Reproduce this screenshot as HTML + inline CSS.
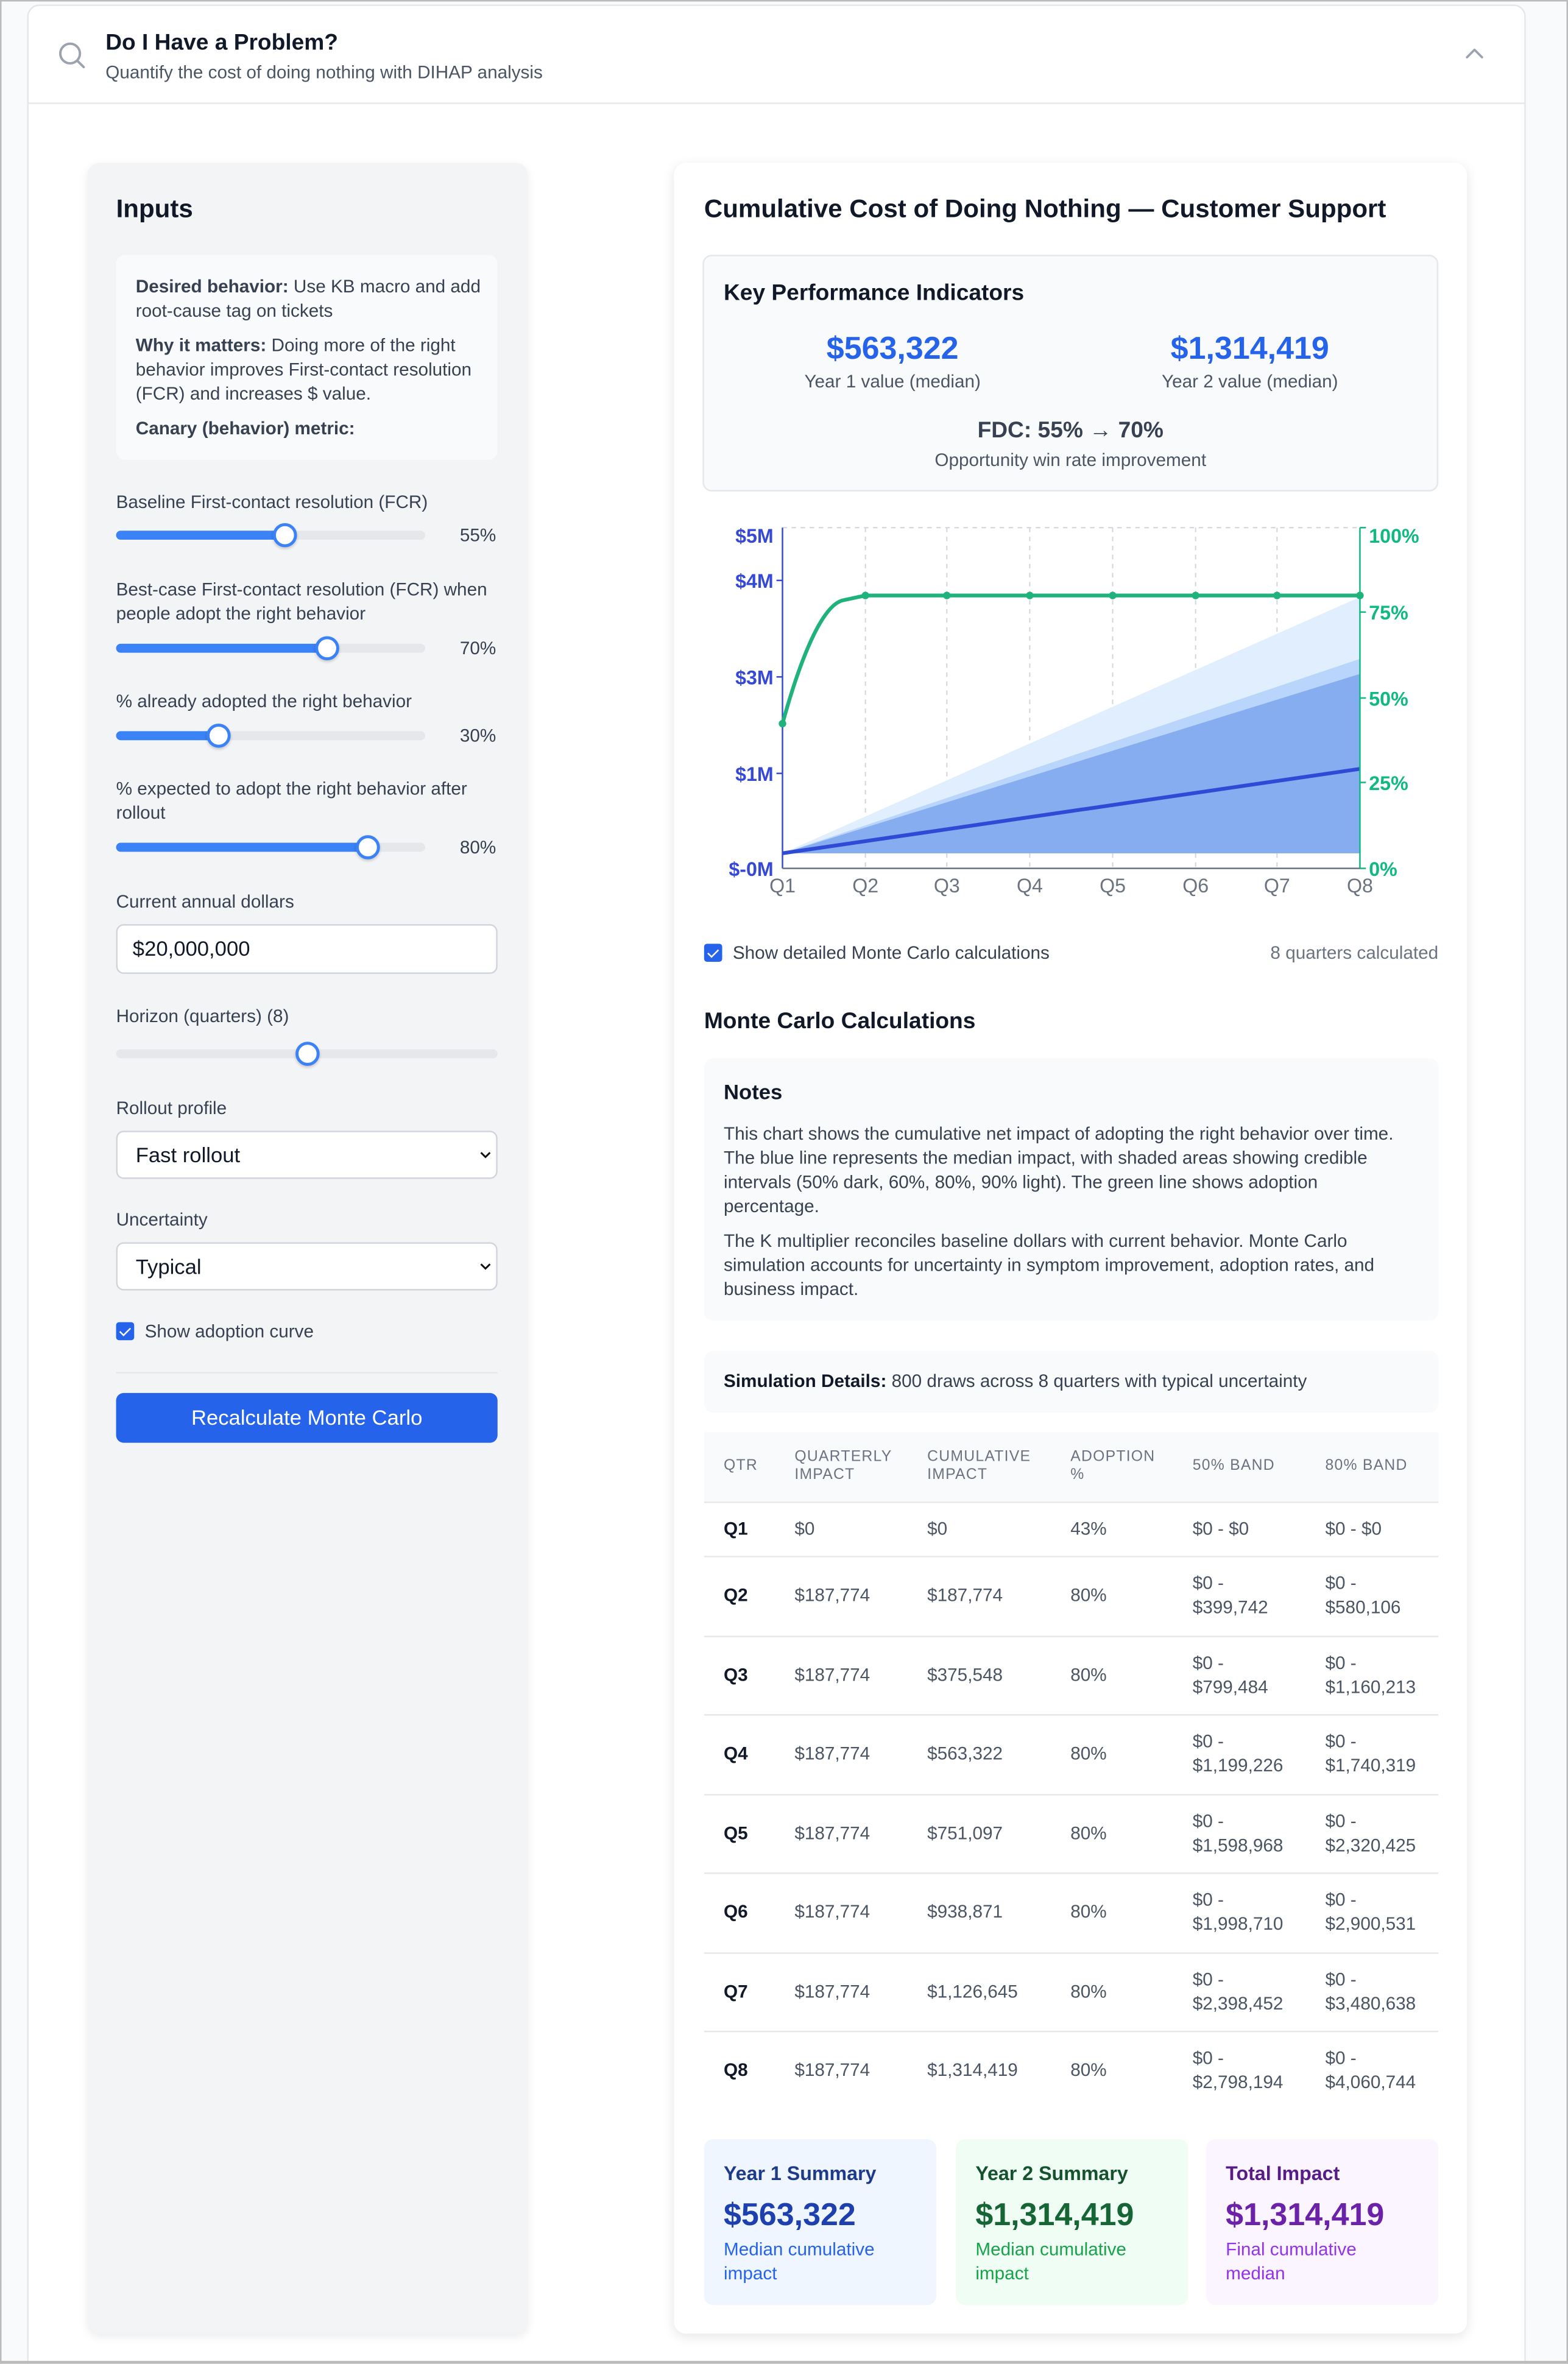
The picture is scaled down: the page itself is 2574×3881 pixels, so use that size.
<!DOCTYPE html>
<html><head><meta charset="utf-8"><style>
html,body{margin:0;padding:0;width:2574px;height:3880px;overflow:hidden;background:#f9fafb}
#w{position:absolute;left:0;top:0;width:1040px;height:1568px;transform:scale(2.475);transform-origin:0 0;font-family:"Liberation Sans",sans-serif;color:#111827;overflow:hidden}
.a{position:absolute;white-space:nowrap}
.t12{font-size:12px;line-height:16px}
.g{color:#374151}
.m{color:#4b5563}
.sl{position:absolute;left:77px;width:205px;height:6px;border-radius:3px;background:#e5e7eb}
.sl i{position:absolute;left:0;top:0;height:6px;border-radius:3px;background:#3b82f6}
.sl b{position:absolute;top:-5px;width:12px;height:12px;border-radius:50%;background:#fff;border:2px solid #3b82f6;box-shadow:0 1px 2px rgba(0,0,0,.2)}
.box{position:absolute;background:#fff;border:1px solid #d1d5db;border-radius:5px;box-sizing:border-box}
.cb{position:absolute;width:12px;height:12px;border-radius:2px;background:#2563eb}
.cb:after{content:"";position:absolute;left:4px;top:1.5px;width:3px;height:6px;border:solid #fff;border-width:0 1.6px 1.6px 0;transform:rotate(45deg)}
.th{color:#6b7280;font-size:10px;letter-spacing:.5px;line-height:12px}
.row{position:absolute;left:467px;width:487px;border-top:1px solid #e5e7eb}
.td{font-size:12px;line-height:16px;color:#4b5563}
</style></head><body><div id="w">
<div class="a" style="left:18px;top:3px;width:994px;height:1600px;background:#fff;border:1px solid #e5e7eb;border-radius:8px;box-sizing:border-box"></div>
<div class="a" style="left:0;top:0;width:1040px;height:1px;background:#bbb"></div>
<div class="a" style="left:0;top:0;width:1px;height:1568px;background:#bbb"></div>
<div class="a" style="left:1039px;top:0;width:1px;height:1568px;background:#bbb"></div>
<div class="a" style="left:0;top:1566px;width:1040px;height:2px;background:#bbb"></div>
<div class="a" style="left:18px;top:68px;width:994px;height:1px;background:#e5e7eb"></div>
<svg class="a" style="left:38px;top:27px" width="20" height="20" viewBox="0 0 20 20"><circle cx="8.5" cy="8.5" r="6.5" fill="none" stroke="#9ca3af" stroke-width="1.6"/><line x1="13.2" y1="13.2" x2="17.5" y2="17.5" stroke="#9ca3af" stroke-width="1.6" stroke-linecap="round"/></svg>
<div class="a" style="left:70px;top:19px;font-size:15px;font-weight:bold;line-height:20px;color:#111827">Do I Have a Problem?</div>
<div class="a t12 m" style="left:70px;top:40px">Quantify the cost of doing nothing with DIHAP analysis</div>
<svg class="a" style="left:971px;top:30px" width="14" height="10" viewBox="0 0 14 10"><path d="M2 8 L7 3 L12 8" fill="none" stroke="#9ca3af" stroke-width="1.5" stroke-linecap="round" stroke-linejoin="round"/></svg>

<div class="a" style="left:58px;top:108px;width:292px;height:1440px;background:#f3f4f6;border-radius:8px;box-shadow:0 2px 6px rgba(0,0,0,.08)"></div>
<div class="a" style="left:77px;top:129px;font-size:17px;font-weight:bold;line-height:20px">Inputs</div>
<div class="a" style="left:77px;top:169px;width:253px;height:136px;background:#f9fafb;border-radius:6px"></div>
<div class="a t12 g" style="left:90px;top:182px;line-height:16px;white-space:normal;width:235px"><b>Desired behavior:</b> Use KB macro and add root-cause tag on tickets</div>
<div class="a t12 g" style="left:90px;top:221px;white-space:normal;width:235px"><b>Why it matters:</b> Doing more of the right behavior improves First-contact resolution (FCR) and increases $ value.</div>
<div class="a t12 g" style="left:90px;top:276px"><b>Canary (behavior) metric:</b></div>

<div class="a t12 g" style="left:77px;top:325px">Baseline First-contact resolution (FCR)</div>
<div class="sl" style="top:352px"><i style="width:112px"></i><b style="left:104px"></b></div>
<div class="a t12 g" style="left:305px;top:347px">55%</div>
<div class="a t12 g" style="left:77px;top:383px;line-height:16px">Best-case First-contact resolution (FCR) when<br>people adopt the right behavior</div>
<div class="sl" style="top:427px"><i style="width:140px"></i><b style="left:132px"></b></div>
<div class="a t12 g" style="left:305px;top:422px">70%</div>
<div class="a t12 g" style="left:77px;top:457px">% already adopted the right behavior</div>
<div class="sl" style="top:485px"><i style="width:68px"></i><b style="left:60px"></b></div>
<div class="a t12 g" style="left:305px;top:480px">30%</div>
<div class="a t12 g" style="left:77px;top:515px;line-height:16px">% expected to adopt the right behavior after<br>rollout</div>
<div class="sl" style="top:559px"><i style="width:167px"></i><b style="left:159px"></b></div>
<div class="a t12 g" style="left:305px;top:554px">80%</div>
<div class="a t12 g" style="left:77px;top:590px">Current annual dollars</div>
<div class="box" style="left:77px;top:613px;width:253px;height:33px"></div>
<div class="a" style="left:88px;top:621px;font-size:14px;line-height:17px">$20,000,000</div>
<div class="a t12 g" style="left:77px;top:666px">Horizon (quarters) (8)</div>
<div class="sl" style="top:696px;width:253px"><b style="left:119px;top:-5px"></b></div>
<div class="a t12 g" style="left:77px;top:727px">Rollout profile</div>
<div class="box" style="left:77px;top:750px;width:253px;height:32px"></div>
<div class="a" style="left:90px;top:758px;font-size:14px;line-height:17px">Fast rollout</div>
<svg class="a" style="left:318px;top:762px" width="8" height="8" viewBox="0 0 8 8"><path d="M1 2.5 L4 5.5 L7 2.5" fill="none" stroke="#111" stroke-width="1.2"/></svg>
<div class="a t12 g" style="left:77px;top:801px">Uncertainty</div>
<div class="box" style="left:77px;top:824px;width:253px;height:32px"></div>
<div class="a" style="left:90px;top:832px;font-size:14px;line-height:17px">Typical</div>
<svg class="a" style="left:318px;top:836px" width="8" height="8" viewBox="0 0 8 8"><path d="M1 2.5 L4 5.5 L7 2.5" fill="none" stroke="#111" stroke-width="1.2"/></svg>
<div class="cb" style="left:77px;top:877px"></div>
<div class="a t12 g" style="left:96px;top:875px">Show adoption curve</div>
<div class="a" style="left:77px;top:910px;width:253px;height:1px;background:#e5e7eb"></div>
<div class="a" style="left:77px;top:924px;width:253px;height:33px;background:#2563eb;border-radius:5px;color:#fff;font-size:14px;line-height:33px;text-align:center">Recalculate Monte Carlo</div>

<div class="a" style="left:447px;top:108px;width:526px;height:1440px;background:#fff;border-radius:8px;box-shadow:0 2px 8px rgba(0,0,0,.1)"></div>
<div class="a" style="left:467px;top:129px;font-size:17px;font-weight:bold;line-height:20px">Cumulative Cost of Doing Nothing — Customer Support</div>
<div class="a" style="left:466px;top:169px;width:488px;height:157px;background:#f9fafb;border:1px solid #e5e7eb;border-radius:6px;box-sizing:border-box"></div>
<div class="a" style="left:480px;top:185px;font-size:15px;font-weight:bold;line-height:20px">Key Performance Indicators</div>
<div class="a" style="left:492px;top:219px;width:200px;text-align:center;font-size:21px;font-weight:bold;line-height:25px;color:#2563eb">$563,322</div>
<div class="a t12 m" style="left:492px;top:245px;width:200px;text-align:center">Year 1 value (median)</div>
<div class="a" style="left:729px;top:219px;width:200px;text-align:center;font-size:21px;font-weight:bold;line-height:25px;color:#2563eb">$1,314,419</div>
<div class="a t12 m" style="left:729px;top:245px;width:200px;text-align:center">Year 2 value (median)</div>
<div class="a" style="left:610px;top:276px;width:200px;text-align:center;font-size:15px;font-weight:bold;line-height:20px;color:#374151">FDC: 55% → 70%</div>
<div class="a t12 m" style="left:560px;top:297px;width:300px;text-align:center">Opportunity win rate improvement</div>

<svg class="a" style="left:467px;top:340px" width="490" height="260" viewBox="467 340 490 260" font-family="Liberation Sans, sans-serif">
<g stroke="#d1d5db" stroke-width="0.8" stroke-dasharray="3,3">
<line x1="519" y1="350" x2="902" y2="350"/>
<line x1="574" y1="350" x2="574" y2="576"/><line x1="628" y1="350" x2="628" y2="576"/><line x1="683" y1="350" x2="683" y2="576"/><line x1="738" y1="350" x2="738" y2="576"/><line x1="793" y1="350" x2="793" y2="576"/><line x1="847" y1="350" x2="847" y2="576"/>
</g>
<polygon points="519,566 902,396 902,566" fill="#e0eefe"/>
<polygon points="519,566 902,437 902,566" fill="#bad5fb"/>
<polygon points="519,566 902,447 902,566" fill="#85adf0"/>
<line x1="519" y1="566" x2="902" y2="510" stroke="#2f4bd6" stroke-width="2.5"/>
<line x1="519" y1="350" x2="519" y2="576" stroke="#3549d6" stroke-width="1"/>
<line x1="902" y1="350" x2="902" y2="576" stroke="#10b981" stroke-width="1"/>
<line x1="519" y1="576" x2="902" y2="576" stroke="#6b7280" stroke-width="1"/>
<path d="M519 480 C530 440 545 400 560 398 L574 395 L902 395" fill="none" stroke="#1fb37b" stroke-width="2.5"/>
<g fill="#1fb37b"><circle cx="519" cy="480" r="2.5"/><circle cx="574" cy="395" r="2.5"/><circle cx="628" cy="395" r="2.5"/><circle cx="683" cy="395" r="2.5"/><circle cx="738" cy="395" r="2.5"/><circle cx="793" cy="395" r="2.5"/><circle cx="847" cy="395" r="2.5"/><circle cx="902" cy="395" r="2.5"/></g>
<g fill="#3549d6" font-size="13" font-weight="bold" text-anchor="end">
<text x="513" y="360">$5M</text><text x="513" y="390">$4M</text><text x="513" y="454">$3M</text><text x="513" y="518">$1M</text><text x="513" y="581">$-0M</text></g>
<g stroke="#3549d6"><line x1="515" y1="385" x2="519" y2="385"/><line x1="515" y1="449" x2="519" y2="449"/><line x1="515" y1="513" x2="519" y2="513"/></g>
<g stroke="#10b981"><line x1="902" y1="350" x2="906" y2="350"/><line x1="902" y1="406" x2="906" y2="406"/><line x1="902" y1="463" x2="906" y2="463"/><line x1="902" y1="519" x2="906" y2="519"/><line x1="902" y1="576" x2="906" y2="576"/></g>
<g fill="#10b981" font-size="13" font-weight="bold">
<text x="908" y="360">100%</text><text x="908" y="411">75%</text><text x="908" y="468">50%</text><text x="908" y="524">25%</text><text x="908" y="581">0%</text></g>
<g fill="#6b7280" font-size="13" text-anchor="middle">
<text x="519" y="592">Q1</text><text x="574" y="592">Q2</text><text x="628" y="592">Q3</text><text x="683" y="592">Q4</text><text x="738" y="592">Q5</text><text x="793" y="592">Q6</text><text x="847" y="592">Q7</text><text x="902" y="592">Q8</text></g>
</svg>

<div class="cb" style="left:467px;top:626px"></div>
<div class="a t12 g" style="left:486px;top:624px">Show detailed Monte Carlo calculations</div>
<div class="a t12" style="left:800px;top:624px;width:154px;text-align:right;color:#6b7280">8 quarters calculated</div>
<div class="a" style="left:467px;top:668px;font-size:15px;font-weight:bold;line-height:20px">Monte Carlo Calculations</div>
<div class="a" style="left:467px;top:702px;width:487px;height:174px;background:#f9fafb;border-radius:6px"></div>
<div class="a" style="left:480px;top:715px;font-size:14px;font-weight:bold;line-height:18px">Notes</div>
<div class="a t12 g" style="left:480px;top:744px;width:460px;white-space:normal">This chart shows the cumulative net impact of adopting the right behavior over time. The blue line represents the median impact, with shaded areas showing credible intervals (50% dark, 60%, 80%, 90% light). The green line shows adoption percentage.</div>
<div class="a t12 g" style="left:480px;top:815px;width:460px;white-space:normal">The K multiplier reconciles baseline dollars with current behavior. Monte Carlo simulation accounts for uncertainty in symptom improvement, adoption rates, and business impact.</div>
<div class="a" style="left:467px;top:896px;width:487px;height:41px;background:#f9fafb;border-radius:6px"></div>
<div class="a t12 g" style="left:480px;top:908px"><b style="color:#111827">Simulation Details:</b> 800 draws across 8 quarters with typical uncertainty</div>

<div class="a" style="left:467px;top:950px;width:487px;height:46px;background:#f9fafb"></div>
<div class="a th" style="left:480px;top:967px">QTR</div>
<div class="a th" style="left:527px;top:961px">QUARTERLY<br>IMPACT</div>
<div class="a th" style="left:615px;top:961px">CUMULATIVE<br>IMPACT</div>
<div class="a th" style="left:710px;top:961px">ADOPTION<br>%</div>
<div class="a th" style="left:791px;top:967px">50% BAND</div>
<div class="a th" style="left:879px;top:967px">80% BAND</div>

<div class="row" style="top:996px"></div>
<div class="a td" style="left:480px;top:1006px;color:#111827;font-weight:bold">Q1</div>
<div class="a td" style="left:527px;top:1006px">$0</div><div class="a td" style="left:615px;top:1006px">$0</div><div class="a td" style="left:710px;top:1006px">43%</div><div class="a td" style="left:791px;top:1006px">$0 - $0</div><div class="a td" style="left:879px;top:1006px">$0 - $0</div>

<div class="row" style="top:1032px"></div>
<div class="a td" style="left:480px;top:1050px;color:#111827;font-weight:bold">Q2</div><div class="a td" style="left:527px;top:1050px">$187,774</div><div class="a td" style="left:615px;top:1050px">$187,774</div><div class="a td" style="left:710px;top:1050px">80%</div><div class="a td" style="left:791px;top:1042px">$0 -<br>$399,742</div><div class="a td" style="left:879px;top:1042px">$0 -<br>$580,106</div>

<div class="row" style="top:1085px"></div>
<div class="a td" style="left:480px;top:1103px;color:#111827;font-weight:bold">Q3</div><div class="a td" style="left:527px;top:1103px">$187,774</div><div class="a td" style="left:615px;top:1103px">$375,548</div><div class="a td" style="left:710px;top:1103px">80%</div><div class="a td" style="left:791px;top:1095px">$0 -<br>$799,484</div><div class="a td" style="left:879px;top:1095px">$0 -<br>$1,160,213</div>

<div class="row" style="top:1137px"></div>
<div class="a td" style="left:480px;top:1155px;color:#111827;font-weight:bold">Q4</div><div class="a td" style="left:527px;top:1155px">$187,774</div><div class="a td" style="left:615px;top:1155px">$563,322</div><div class="a td" style="left:710px;top:1155px">80%</div><div class="a td" style="left:791px;top:1147px">$0 -<br>$1,199,226</div><div class="a td" style="left:879px;top:1147px">$0 -<br>$1,740,319</div>

<div class="row" style="top:1190px"></div>
<div class="a td" style="left:480px;top:1208px;color:#111827;font-weight:bold">Q5</div><div class="a td" style="left:527px;top:1208px">$187,774</div><div class="a td" style="left:615px;top:1208px">$751,097</div><div class="a td" style="left:710px;top:1208px">80%</div><div class="a td" style="left:791px;top:1200px">$0 -<br>$1,598,968</div><div class="a td" style="left:879px;top:1200px">$0 -<br>$2,320,425</div>

<div class="row" style="top:1242px"></div>
<div class="a td" style="left:480px;top:1260px;color:#111827;font-weight:bold">Q6</div><div class="a td" style="left:527px;top:1260px">$187,774</div><div class="a td" style="left:615px;top:1260px">$938,871</div><div class="a td" style="left:710px;top:1260px">80%</div><div class="a td" style="left:791px;top:1252px">$0 -<br>$1,998,710</div><div class="a td" style="left:879px;top:1252px">$0 -<br>$2,900,531</div>

<div class="row" style="top:1295px"></div>
<div class="a td" style="left:480px;top:1313px;color:#111827;font-weight:bold">Q7</div><div class="a td" style="left:527px;top:1313px">$187,774</div><div class="a td" style="left:615px;top:1313px">$1,126,645</div><div class="a td" style="left:710px;top:1313px">80%</div><div class="a td" style="left:791px;top:1305px">$0 -<br>$2,398,452</div><div class="a td" style="left:879px;top:1305px">$0 -<br>$3,480,638</div>

<div class="row" style="top:1347px"></div>
<div class="a td" style="left:480px;top:1365px;color:#111827;font-weight:bold">Q8</div><div class="a td" style="left:527px;top:1365px">$187,774</div><div class="a td" style="left:615px;top:1365px">$1,314,419</div><div class="a td" style="left:710px;top:1365px">80%</div><div class="a td" style="left:791px;top:1357px">$0 -<br>$2,798,194</div><div class="a td" style="left:879px;top:1357px">$0 -<br>$4,060,744</div>

<div class="a" style="left:467px;top:1419px;width:154px;height:110px;background:#eff6ff;border-radius:6px"></div>
<div class="a" style="left:480px;top:1433px;font-size:13px;font-weight:bold;line-height:17px;color:#1e3a8a">Year 1 Summary</div>
<div class="a" style="left:480px;top:1457px;font-size:21px;font-weight:bold;line-height:26px;color:#1e40af">$563,322</div>
<div class="a t12" style="left:480px;top:1484px;color:#2563eb">Median cumulative<br>impact</div>

<div class="a" style="left:634px;top:1419px;width:154px;height:110px;background:#f0fdf4;border-radius:6px"></div>
<div class="a" style="left:647px;top:1433px;font-size:13px;font-weight:bold;line-height:17px;color:#14532d">Year 2 Summary</div>
<div class="a" style="left:647px;top:1457px;font-size:21px;font-weight:bold;line-height:26px;color:#166534">$1,314,419</div>
<div class="a t12" style="left:647px;top:1484px;color:#16a34a">Median cumulative<br>impact</div>

<div class="a" style="left:800px;top:1419px;width:154px;height:110px;background:#faf5ff;border-radius:6px"></div>
<div class="a" style="left:813px;top:1433px;font-size:13px;font-weight:bold;line-height:17px;color:#581c87">Total Impact</div>
<div class="a" style="left:813px;top:1457px;font-size:21px;font-weight:bold;line-height:26px;color:#6b21a8">$1,314,419</div>
<div class="a t12" style="left:813px;top:1484px;color:#9333ea">Final cumulative<br>median</div>
</div></body></html>
